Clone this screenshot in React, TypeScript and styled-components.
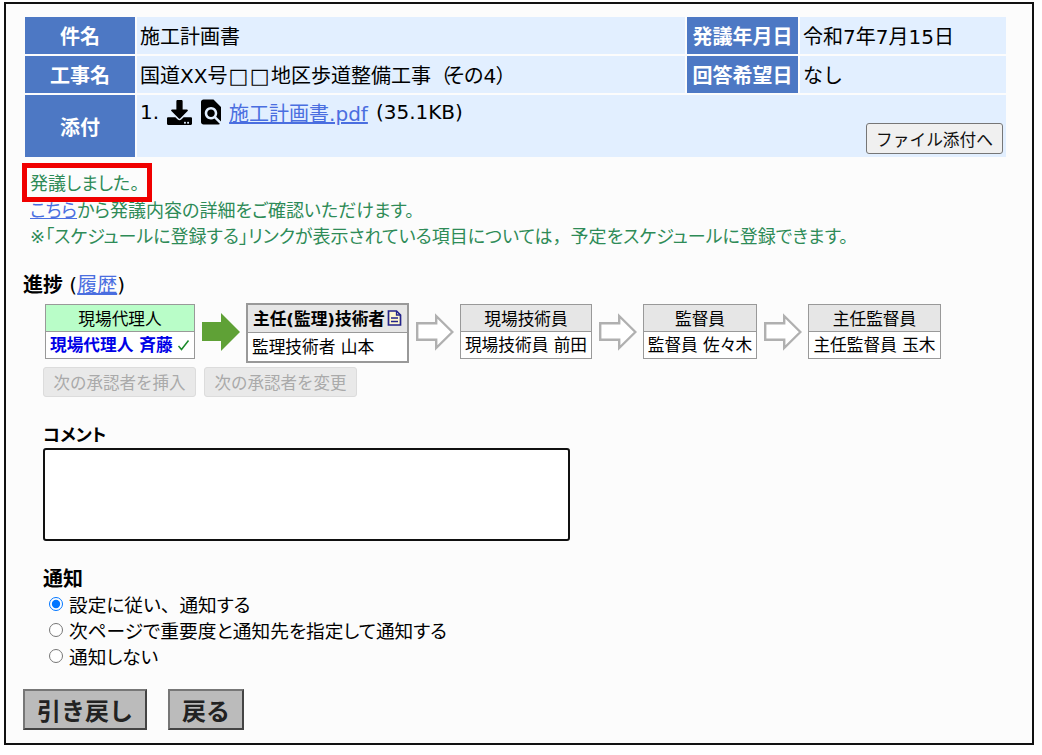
import React from 'react'
import styled, { createGlobalStyle } from 'styled-components'
import { FaDownload } from 'react-icons/fa'
import { MdFindInPage } from 'react-icons/md'

const FONT = `"DejaVu Sans", "Noto Sans CJK JP", sans-serif`

const GlobalStyle = createGlobalStyle`
  html, body {
    margin: 0;
    padding: 0;
    background: #ffffff;
    font-family: ${FONT};
    font-feature-settings: "palt";
    color: #000;
  }
`

const Frame = styled.div`
  box-sizing: border-box;
  width: 1030px;
  height: 743px;
  margin: 2px 0 0 4px;
  padding: 13px 27px 0 19px;
  border: 2px solid #111;
  background: #fcfcfc;
  position: relative;
`

const InfoGrid = styled.div`
  display: grid;
  grid-template-columns: 110px 548px 111px 206px;
  grid-template-rows: 37px 37px 62px;
  gap: 2px;
  font-size: 20px;
  font-feature-settings: normal;
`

const Th = styled.div`
  display: flex;
  align-items: center;
  justify-content: center;
  background: #4d78c4;
  color: #fff;
  font-weight: bold;
`

const Td = styled.div<{ $span?: number }>`
  display: flex;
  align-items: center;
  padding-left: 3px;
  background: #e2efff;
  grid-column: ${({ $span }) => ($span ? `span ${$span}` : 'auto')};
`

const AttachCell = styled(Td)`
  flex-direction: column;
  align-items: stretch;
  justify-content: space-between;
  padding: 2px 3px 3px 3px;
`

const AttachLine = styled.div`
  display: flex;
  align-items: center;
  gap: 8px;
  height: 30px;
  margin-bottom: -4px;
`

const DownloadIcon = styled(FaDownload)`
  width: 25px;
  height: 25px;
`

const FindIcon = styled(MdFindInPage)`
  width: 30px;
  height: 30px;
  margin: 0 -5px 0 -4px;
`

const DocLink = styled.a`
  color: #4a6ee0;
  text-decoration: underline;
`

const Boxes = styled.span`
  font-size: 21px;
  letter-spacing: 1.5px;
  margin-left: 1px;
`

const Proportional = styled.span`
  font-feature-settings: "palt";
  margin-left: -5px;
`

const FullWidth = styled.span`
  font-feature-settings: normal;
`

const FileButton = styled.button`
  align-self: flex-end;
  flex-shrink: 0;
  width: 137px;
  height: 31px;
  padding: 0;
  font-family: ${FONT};
  font-size: 16.7px;
  color: #111;
  background: #f0f0f0;
  border: 1px solid #767676;
  border-radius: 3px;
`

const Messages = styled.div`
  margin: 14px 0 0 5px;
  font-size: 18px;
  line-height: 26.5px;
  color: #2e8b57;
  white-space: nowrap;
`

const MsgLink = styled.a`
  color: #4a6ee0;
  text-decoration: underline;
`

const Highlight = styled.div`
  position: absolute;
  left: 16px;
  top: 159px;
  width: 130px;
  height: 39px;
  box-sizing: border-box;
  border: 5px solid #f00000;
`

const ProgressLabel = styled.div`
  margin: 21px 0 0 -2px;
  font-size: 20px;
  line-height: 26px;
`

const Steps = styled.div`
  display: flex;
  align-items: flex-start;
  margin: 6px 0 0 20px;
`

const StepBox = styled.div<{ $current?: boolean; $w: number }>`
  box-sizing: border-box;
  width: ${({ $w }) => $w}px;
  border: ${({ $current }) => ($current ? '2px' : '1px')} solid #999;
  background: #fff;
  margin-top: ${({ $current }) => ($current ? '-1px' : '0')};
  flex-shrink: 0;
`

const StepHead = styled.div<{ $done?: boolean; $current?: boolean }>`
  height: ${({ $current }) => ($current ? '28px' : '27px')};
  box-sizing: border-box;
  border-bottom: 1px solid #999;
  background: ${({ $done }) => ($done ? '#b9fdc8' : '#e6e6e6')};
  font-size: 16.7px;
  font-weight: ${({ $current }) => ($current ? 'bold' : 'normal')};
  white-space: nowrap;
  display: flex;
  align-items: center;
  justify-content: center;
  gap: 2px;
`

const StepBody = styled.div<{ $done?: boolean; $current?: boolean }>`
  height: ${({ $current }) => ($current ? '28px' : '26px')};
  line-height: ${({ $current }) => ($current ? '28px' : '26px')};
  padding-left: ${({ $current, $done }) => ($current || $done ? '4px' : '0')};
  text-align: ${({ $current, $done }) => ($current || $done ? 'left' : 'center')};
  font-size: 16.7px;
  white-space: nowrap;
  color: ${({ $done }) => ($done ? '#0000e6' : '#000')};
  font-weight: ${({ $done }) => ($done ? 'bold' : 'normal')};
  display: ${({ $done }) => ($done ? 'flex' : 'block')};
  align-items: center;
  gap: 4px;
`

const ArrowSvg = styled.svg`
  flex-shrink: 0;
  margin: 9px 6px 0 7px;
`

const StepActions = styled.div`
  display: flex;
  gap: 8px;
  margin: 4px 0 0 18px;
`

const DisabledButton = styled.button`
  width: 153px;
  height: 30px;
  padding: 0;
  font-family: ${FONT};
  font-size: 16.5px;
  color: #aaa;
  background: #e9e9e9;
  border: 1px solid #dcdcdc;
  border-radius: 3px;
`

const SectionLabel = styled.div<{ $top: number; $size: number }>`
  margin: ${({ $top }) => $top}px 0 0 18px;
  font-size: ${({ $size }) => $size}px;
  font-weight: bold;
  line-height: 26px;
`

const CommentBox = styled.textarea`
  display: block;
  box-sizing: border-box;
  width: 527px;
  height: 93px;
  margin: 0 0 0 18px;
  border: 2px solid #111;
  border-radius: 3px;
  background: #fff;
  resize: none;
  outline: none;
`

const RadioList = styled.div`
  margin: -1px 0 0 24px;
`

const RadioRow = styled.label`
  display: flex;
  align-items: center;
  height: 26px;
  font-size: 18.7px;
  gap: 6px;
`

const Radio = styled.input`
  width: 14px;
  height: 14px;
  margin: 0;
`

const Footer = styled.div`
  display: flex;
  gap: 21px;
  margin: 20px 0 0 -2px;
`

const MainButton = styled.button<{ $w: number }>`
  box-sizing: border-box;
  width: ${({ $w }) => $w}px;
  height: 41px;
  padding: 0;
  font-family: ${FONT};
  font-size: 24px;
  font-weight: bold;
  color: #222;
  background: #bbbbbb;
  border: 2px solid;
  border-color: #777 #444 #444 #777;
`

const Arrow = ({ active }: { active?: boolean }) =>
  active ? (
    <ArrowSvg width="38" height="38" viewBox="0 0 38 38">
      <polygon points="0,9 19,9 19,0 38,19 19,38 19,28 0,28" fill="#5fa136" />
    </ArrowSvg>
  ) : (
    <ArrowSvg width="38" height="38" viewBox="0 0 38 38">
      <polygon
        points="1.2,10.2 20.2,10.2 20.2,3 36.4,19 20.2,35 20.2,26.8 1.2,26.8"
        fill="#fff"
        stroke="#b0b0b0"
        strokeWidth="2.4"
      />
    </ArrowSvg>
  )

const DocIcon = () => (
  <svg width="15" height="16" viewBox="0 0 15 16">
    <path d="M1.5 1 H9.5 L13.5 5 V15 H1.5 Z" fill="#fdf6cf" stroke="#23238a" strokeWidth="1.7" />
    <path d="M9.5 1 V5 H13.5 M4 8 H11 M4 11.5 H11" fill="none" stroke="#23238a" strokeWidth="1.3" />
  </svg>
)

const CheckIcon = () => (
  <svg width="13" height="12" viewBox="0 0 13 12">
    <path d="M1.5 7 L4.5 10.5 L11.5 1.5" fill="none" stroke="#1a8a2a" strokeWidth="1.5" />
  </svg>
)

export default function App() {
  return (
    <>
      <GlobalStyle />
      <Frame>
        <InfoGrid>
          <Th>件名</Th>
          <Td>施工計画書</Td>
          <Th>発議年月日</Th>
          <Td>令和7年7月15日</Td>
          <Th>工事名</Th>
          <Td>
            <span>
              国道XX号<Boxes>□□</Boxes>地区歩道整備工事（<Proportional>その4）</Proportional>
            </span>
          </Td>
          <Th>回答希望日</Th>
          <Td>なし</Td>
          <Th>添付</Th>
          <AttachCell $span={3}>
            <AttachLine>
              <span>1.</span>
              <DownloadIcon />
              <FindIcon />
              <DocLink href="#">施工計画書.pdf</DocLink>
              <span>(35.1KB)</span>
            </AttachLine>
            <FileButton>ファイル添付へ</FileButton>
          </AttachCell>
        </InfoGrid>

        <Messages>
          <div>発議しました。</div>
          <div>
            <MsgLink href="#">こちら</MsgLink>から発議内容の詳細をご確認いただけます。
          </div>
          <div>
            ※「スケジュールに登録する」リンクが表示されている項目については<FullWidth>，</FullWidth>
            予定をスケジュールに登録できます。
          </div>
        </Messages>
        <Highlight />

        <ProgressLabel>
          <b>進捗</b> (<MsgLink href="#">履歴</MsgLink>)
        </ProgressLabel>

        <Steps>
          <StepBox $w={150}>
            <StepHead $done>現場代理人</StepHead>
            <StepBody $done>
              現場代理人 斉藤 <CheckIcon />
            </StepBody>
          </StepBox>
          <Arrow active />
          <StepBox $w={163} $current>
            <StepHead $current>
              主任(監理)技術者
              <DocIcon />
            </StepHead>
            <StepBody $current>監理技術者 山本</StepBody>
          </StepBox>
          <Arrow />
          <StepBox $w={132}>
            <StepHead>現場技術員</StepHead>
            <StepBody>現場技術員 前田</StepBody>
          </StepBox>
          <Arrow />
          <StepBox $w={114}>
            <StepHead>監督員</StepHead>
            <StepBody>監督員 佐々木</StepBody>
          </StepBox>
          <Arrow />
          <StepBox $w={133}>
            <StepHead>主任監督員</StepHead>
            <StepBody>主任監督員 玉木</StepBody>
          </StepBox>
        </Steps>

        <StepActions>
          <DisabledButton disabled>次の承認者を挿入</DisabledButton>
          <DisabledButton disabled>次の承認者を変更</DisabledButton>
        </StepActions>

        <SectionLabel $top={25} $size={17.5}>コメント</SectionLabel>
        <CommentBox readOnly />

        <SectionLabel $top={25} $size={20}>通知</SectionLabel>
        <RadioList>
          <RadioRow>
            <Radio type="radio" name="notify" defaultChecked />
            <span>
              設定に従い<FullWidth>、</FullWidth>通知する
            </span>
          </RadioRow>
          <RadioRow>
            <Radio type="radio" name="notify" />
            次ページで重要度と通知先を指定して通知する
          </RadioRow>
          <RadioRow>
            <Radio type="radio" name="notify" />
            通知しない
          </RadioRow>
        </RadioList>

        <Footer>
          <MainButton $w={124}>引き戻し</MainButton>
          <MainButton $w={76}>戻る</MainButton>
        </Footer>
      </Frame>
    </>
  )
}
